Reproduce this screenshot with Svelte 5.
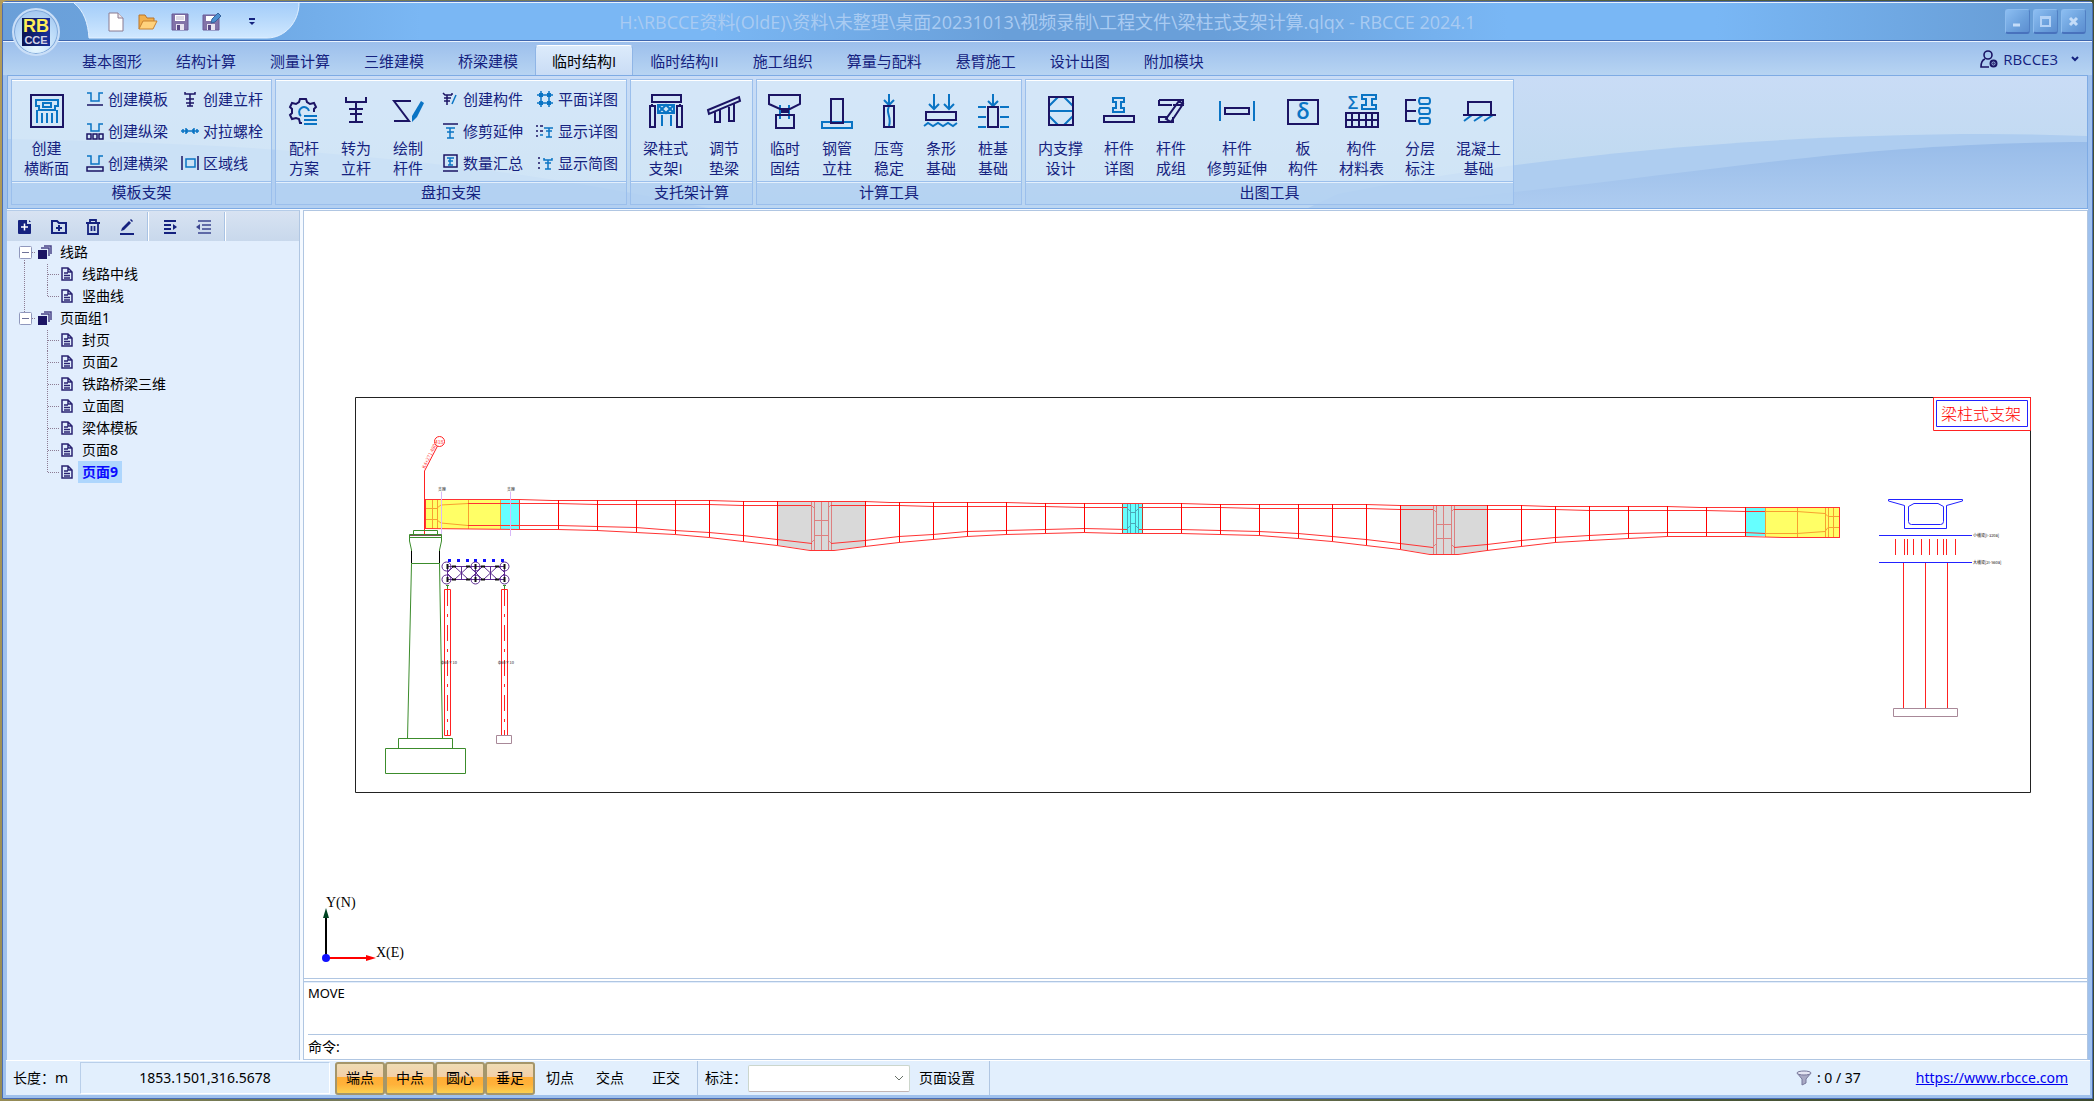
<script lang="ts">
  interface Glyph {
    dark?: string;
    blue?: string;
    fillBlue?: string;
    text?: string;
    tx?: number;
    ty?: number;
    ts?: number;
  }

  interface Tool {
    lines: string[];
    icon: string;
  }

  interface Group {
    title: string;
    big: Tool[];
    small: [string, string][][];
  }

  // 36x36 ribbon icons
  const bigIcons: Record<string, Glyph> = {
    section: {
      dark: 'M2 2h32v32H2z',
      blue: 'M7 7h22v6h-3v4H10v-4H7zM14 10h8v4h-8zM8 17v13M13 20v10M18 20v10M23 20v10M28 17v13',
    },
    gear: {
      dark: 'M16 30h-2l-1-4-3-1-4 1-2-4 2-2v-4l-2-2 2-4 4 1 3-2 1-3h6l1 3 3 2 4-1 2 4-2 2v3',
      blue: 'M15 23a5 5 0 1 1 8-5M18 23h13M18 27h13M18 31h13',
    },
    pole: { dark: 'M8 4v5h20V4M18 9v20M11 16h14M12 21h12M11 29h14' },
    drawbar: { dark: 'M21 8H4l15 20H4', fillBlue: 'M31 8l3 2-7 14-5 5v-6z' },
    beamColumn: {
      dark: 'M4 2h29v7H4zM2 13h5v21H2zM29 13h5v21h-5zM4 13v-2M32 13v-2',
      blue: 'M10 12h16v8H10zM10 12l8 8 8-8M10 20l8-8 8 8M14 22v11M23 22v11',
    },
    pad: { dark: 'M2 17L33 4l1 4L3 21zM9 19v10h5V17M23 14v14h5V11' },
    fix: {
      dark: 'M2 2h31v9l-10 5H13L2 11zM14 18h8M9 22h18v13H9zM14 19h8',
      blue: 'M13 12v14M22 12v14M11 22h4M20 22h4',
    },
    pipe: { dark: 'M12 6h12v24H12z', blue: 'M3 29h30v6H3z' },
    press: { dark: 'M13 13h10v21H13z', blue: 'M18 1v11M13 7l5 5 5-5M18 14c-4 5 3 9 0 19' },
    strip: {
      dark: 'M3 19h30v8H3z',
      blue: 'M11 1v15M6 11l5 5 5-5M26 1v15M21 11l5 5 5-5M1 33l4-3 5 3 5-3 5 3 5-3 5 3 4-3',
    },
    pile: {
      dark: 'M13 14h10v20H13z',
      blue: 'M18 1v12M13 8l5 5 5-5M3 14h8M25 14h9M3 24h8M25 24h9M3 34h8M25 34h9',
    },
    brace: { dark: 'M6 4h24v28H6z', blue: 'M6 18h24M15 4L6 13M21 4l9 9M6 23l9 9M30 23l-9 9' },
    detail: {
      dark: 'M3 23h30v6H3z',
      blue: 'M12 5h11v4h-3v6h3v4H12v-4h3V9h-3z',
    },
    group: { dark: 'M6 7h24v5H20M6 7v5h13M6 24h8v5H6zM14 29h6v-5M26 8l4 3-12 18-5-3z' },
    trim: { dark: 'M6 15h24v6H6z', blue: 'M1 8v20M35 8v20' },
    plate: { dark: 'M3 7h30v24H3z', text: 'δ', tx: 18, ty: 26, ts: 22 },
    list: {
      dark: 'M2 20h32v14H2zM2 27h32M8 20v14M15 20v14M22 20v14M28 20v14',
      blue: 'M18 2h14v4h-4v6h4v4H18v-4h4V6h-4z',
      text: 'Σ',
      tx: 9,
      ty: 16,
      ts: 18,
    },
    layer: {
      dark: 'M14 7H4v21h10M4 18h10',
      blue: 'M18 5h8q2 0 2 3t-2 3h-8q-2-3 0-6zM18 15h8q2 0 2 3t-2 3h-8q-2-3 0-6zM18 25h8q2 0 2 3t-2 3h-8q-2-3 0-6z',
    },
    concrete: { dark: 'M7 22V9h23v13M2 22h33', blue: 'M11 22l-8 6M22 22l-9 6M32 22l-9 6' },
  };

  // 18x18 ribbon icons
  const smallIcons: Record<string, Glyph> = {
    form: { dark: 'M1 15h16', blue: 'M1 3h4v8h8V3h4' },
    stringer: { dark: 'M1 12h4v5H1zM7 12h4v5H7zM13 12h4v5h-4z', blue: 'M1 2h4v7h8V2h4' },
    cross: { dark: 'M1 13h16v4H1z', blue: 'M1 2h4v8h8V2h4' },
    upright: { dark: 'M4 2v2h10V2M9 4v12M5 9h8M5 13h8M6 16h6' },
    bolt: { blue: 'M0 9h18M5 6v6M13 6v6M2 7v4M16 7v4M6 7v4M12 7v4' },
    region: { dark: 'M1 2v14M17 2v14', blue: 'M5 5h9v8H5z' },
    member: { dark: 'M2 3l2 2h7M6 5v10M3 8h7M3 11h6M11 5V3', blue: 'M15 5l-4 9' },
    extend: { dark: 'M2 2h15', blue: 'M5 6h9M9 6v10M6 10h7M6 16h7' },
    count: { dark: 'M3 1h13v12H3zM2 17h15', blue: 'M6 4h7M9 4v7M7 7h5M7 11h5' },
    plan: { blue: 'M1 5h16M1 13h16M5 1v16M13 1v16', fillBlue: 'M3 3h4v4H3zM11 3h4v4h-4zM3 11h4v4H3zM11 11h4v4h-4z' },
    showFull: { dark: 'M0 4h2M4 4h3M0 9h2M4 9h3M0 14h2', blue: 'M8 6h9M13 6v9M10 9h6M10 15h6M4 13h3' },
    showBrief: { dark: 'M3 3v2M3 8v2M3 13v2', blue: 'M8 4v2h8V4M12 6v9M9 9h6M9 15h6' },
  };

  const tabs = ['基本图形', '结构计算', '测量计算', '三维建模', '桥梁建模', '临时结构I', '临时结构II', '施工组织', '算量与配料', '悬臂施工', '设计出图', '附加模块'];

  const groups: Group[] = [
    {
      title: '模板支架',
      big: [{ lines: ['创建', '横断面'], icon: 'section' }],
      small: [
        [['创建模板', 'form'], ['创建纵梁', 'stringer'], ['创建横梁', 'cross']],
        [['创建立杆', 'upright'], ['对拉螺栓', 'bolt'], ['区域线', 'region']],
      ],
    },
    {
      title: '盘扣支架',
      big: [
        { lines: ['配杆', '方案'], icon: 'gear' },
        { lines: ['转为', '立杆'], icon: 'pole' },
        { lines: ['绘制', '杆件'], icon: 'drawbar' },
      ],
      small: [
        [['创建构件', 'member'], ['修剪延伸', 'extend'], ['数量汇总', 'count']],
        [['平面详图', 'plan'], ['显示详图', 'showFull'], ['显示简图', 'showBrief']],
      ],
    },
    {
      title: '支托架计算',
      big: [
        { lines: ['梁柱式', '支架I'], icon: 'beamColumn' },
        { lines: ['调节', '垫梁'], icon: 'pad' },
      ],
      small: [],
    },
    {
      title: '计算工具',
      big: [
        { lines: ['临时', '固结'], icon: 'fix' },
        { lines: ['钢管', '立柱'], icon: 'pipe' },
        { lines: ['压弯', '稳定'], icon: 'press' },
        { lines: ['条形', '基础'], icon: 'strip' },
        { lines: ['桩基', '基础'], icon: 'pile' },
      ],
      small: [],
    },
    {
      title: '出图工具',
      big: [
        { lines: ['内支撑', '设计'], icon: 'brace' },
        { lines: ['杆件', '详图'], icon: 'detail' },
        { lines: ['杆件', '成组'], icon: 'group' },
        { lines: ['杆件', '修剪延伸'], icon: 'trim' },
        { lines: ['板', '构件'], icon: 'plate' },
        { lines: ['构件', '材料表'], icon: 'list' },
        { lines: ['分层', '标注'], icon: 'layer' },
        { lines: ['混凝土', '基础'], icon: 'concrete' },
      ],
      small: [],
    },
  ];

  const tree = [
    { name: '线路', pages: ['线路中线', '竖曲线'] },
    { name: '页面组1', pages: ['封页', '页面2', '铁路桥梁三维', '立面图', '梁体模板', '页面8', '页面9'] },
  ];

  const snapNames = ['端点', '中点', '圆心', '垂足', '切点', '交点', '正交'];

  let activeTab = $state('临时结构I');
  let activePage = $state('页面9');
  let snaps = $state<string[]>(['端点', '中点', '圆心', '垂足']);

  function toggleSnap(name: string) {
    snaps = snaps.includes(name) ? snaps.filter((s) => s !== name) : [...snaps, name];
  }

  // segment joints of the continuous girder: x, top y, bottom y
  const joints = [
    [558.5, 500, 529], [597.5, 500, 530], [636.5, 500, 532], [675.5, 500, 534], [709.5, 500, 537],
    [743.5, 501, 541], [777.5, 501, 545], [865.5, 501, 546], [899.5, 502, 542], [933.5, 502, 539],
    [967.5, 502, 536], [1006.5, 502, 534], [1045.5, 503, 533], [1084.5, 503, 532], [1181.5, 503, 533],
    [1220.5, 504, 534], [1259.5, 504, 535], [1298.5, 504, 538], [1332.5, 504, 541], [1366.5, 504, 545],
    [1400.5, 505, 549], [1487.5, 505, 550], [1521.5, 505, 546], [1555.5, 506, 542], [1589.5, 506, 540],
    [1628.5, 506, 538], [1667.5, 506, 536], [1706.5, 507, 536], [1745.5, 507, 536],
  ];
  const topChord = '425,499.5 519,499.5 552,500.5 709,500.5 743,501.5 865,501.5 890,502.5 1006,502.5 1040,503.5 1181,503.5 1215,504.5 1366,504.5 1400,505.5 1521,505.5 1550,506.5 1667,506.5 1700,507.5 1840,507.5';
  const bottomChord = '425,528.5 519,529.5 558,529.5 597,530.5 636,532.5 675,534.5 709,537.5 743,541.5 777,545.5 810,550.5 834,550.5 865,546.5 899,542.5 933,539.5 967,536.5 1006,534.5 1045,533.5 1084,532.5 1122,533.5 1181,533.5 1220,534.5 1259,535.5 1298,538.5 1332,541.5 1366,545.5 1400,549.5 1430,554.5 1458,554.5 1487,550.5 1521,546.5 1555,542.5 1589,540.5 1628,538.5 1667,536.5 1745,536.5 1783,537.5 1840,537.5';
  const slabLines = [
    '468,503.5 558,503.5 597,504.5 709,504.5 743,505.5 811,505.5',
    '831,505.5 899,505.5 933,506.5 1045,506.5 1084,507.5 1127,507.5',
    '1139,507.5 1220,507.5 1259,508.5 1366,508.5 1400,509.5 1433,509.5',
    '1454,509.5 1555,509.5 1589,510.5 1706,510.5 1745,511.5 1765,511.5',
    '468,525.5 558,525.5 636,527.5 675,530.5 709,532.5 743,535.5 777,539.5 812,543.5',
    '831,543.5 865,540.5 899,536.5 933,534.5 967,531.5 1006,530.5 1084,528.5 1127,529.5',
    '1139,529.5 1181,529.5 1259,531.5 1298,533.5 1332,536.5 1366,539.5 1400,543.5 1433,547.5',
    '1454,547.5 1487,544.5 1521,540.5 1555,537.5 1589,535.5 1628,533.5 1667,532.5 1745,532.5 1765,533.5',
  ];

  const wedges = [449, 458, 467, 475, 484, 493, 502];
  const ticks = [1895.5, 1904.5, 1907.5, 1913.5, 1921.5, 1929.5, 1937.5, 1943.5, 1946.5, 1955.5];
</script>

{#snippet glyph(g: Glyph, size: number)}
  <svg class="glyph" width={size} height={size} viewBox="0 0 {size} {size}" aria-hidden="true" stroke-width={size > 20 ? 2 : 1.5}>
    {#if g.blue}<path class="gb" d={g.blue} />{/if}
    {#if g.dark}<path class="gd" d={g.dark} />{/if}
    {#if g.fillBlue}<path class="gf" d={g.fillBlue} />{/if}
    {#if g.text}<text class="gt" x={g.tx} y={g.ty} font-size={g.ts} text-anchor="middle">{g.text}</text>{/if}
  </svg>
{/snippet}

<div class="desktop">
  <div class="window">
    <header class="titlebar">
      <div class="quick">
        <svg class="quick-bg" viewBox="0 0 228 36" preserveAspectRatio="none" aria-hidden="true">
          <defs>
            <linearGradient id="quickFill" x1="0" y1="0" x2="0" y2="1">
              <stop offset="0" stop-color="#a4cdfa" />
              <stop offset="0.4" stop-color="#b4d7fb" />
              <stop offset="1" stop-color="#d0e8ff" />
            </linearGradient>
          </defs>
          <path d="M1 0c10 8 14 20 15 35h178c18 0 32-16 32-35z" fill="url(#quickFill)" />
          <path d="M1 0c10 8 14 20 15 35h178c18 0 32-16 32-35" fill="none" stroke="#e2f0ff" />
        </svg>
        <div class="quick-tools">
          <button aria-label="新建">
            <svg width="18" height="20" viewBox="0 0 18 20"><path d="M2 1h9l5 5v13H2z" fill="#fff" stroke="#8a7b90" /><path d="M11 1v5h5" fill="#eee6ea" stroke="#8a7b90" /></svg>
          </button>
          <button aria-label="打开">
            <svg width="20" height="20" viewBox="0 0 20 20"><path d="M1 17V3h6l2 3h7v3" fill="#f2b04c" stroke="#b8742a" /><path d="M1 17L5 9h14l-4 8z" fill="#ffd27d" stroke="#c98230" /></svg>
          </button>
          <button aria-label="保存">
            <svg width="18" height="20" viewBox="0 0 18 20"><path d="M1 2h16v16H1z" fill="#8273a8" stroke="#6a5a96" /><path d="M4 3h10v6H4z" fill="#fff" /><path d="M5 5h8M5 7h8" stroke="#b9b2cc" /><path d="M5 12h8v6H5z" fill="#e7e3f0" /><path d="M6 13h3v5H6z" fill="#5a4a86" /></svg>
          </button>
          <button aria-label="另存为">
            <svg width="20" height="20" viewBox="0 0 20 20"><path d="M1 3h16v15H1z" fill="#8273a8" stroke="#6a5a96" /><path d="M4 4h10v5H4z" fill="#fff" /><path d="M5 12h8v6H5z" fill="#e7e3f0" /><path d="M6 13h3v5H6z" fill="#5a4a86" /><path d="M10 7l6-6 3 3-6 6-4 1z" fill="#4d8fd0" stroke="#35639c" /></svg>
          </button>
          <button class="more" aria-label="自定义">
            <svg width="8" height="8" viewBox="0 0 8 8"><path d="M1 1h6" stroke="#15227f" stroke-width="2" /><path d="M1 4h6L4 7z" fill="#15227f" /></svg>
          </button>
        </div>
      </div>
      <h1>H:\RBCCE资料(OldE)\资料\未整理\桌面20231013\视频录制\工程文件\梁柱式支架计算.qlqx - RBCCE 2024.1</h1>
      <div class="win-buttons">
        <button aria-label="最小化"><svg width="13" height="13" viewBox="0 0 13 13"><path d="M2 10h7" stroke="#c4dcf8" stroke-width="3" /></svg></button>
        <button aria-label="最大化"><svg width="13" height="13" viewBox="0 0 13 13"><path d="M2 2h9v9H2zM1 3h11" fill="none" stroke="#b4d2f6" stroke-width="2" /></svg></button>
        <button aria-label="关闭"><svg width="13" height="13" viewBox="0 0 13 13"><path d="M3 3l7 7M10 3l-7 7" stroke="#c4dcf8" stroke-width="3" /></svg></button>
      </div>
    </header>

    <button class="orb" aria-label="RBCCE">
      <span class="orb-badge"><b>RB</b><i>CCE</i></span>
    </button>

    <nav class="tabs">
      {#each tabs as tab}
        <button class="tab" class:active={tab === activeTab} onclick={() => (activeTab = tab)}>{tab}</button>
      {/each}
      <button class="user">
        <svg width="18" height="20" viewBox="0 0 18 20" fill="none" stroke="#1b1464" stroke-width="1.6">
          <circle cx="8" cy="6" r="4" />
          <path d="M5 10c-3 1-4 4-4 8h8" />
          <circle cx="13.500" cy="14.500" r="3" stroke-width="2" />
          <circle cx="13.500" cy="14.500" r="0.500" />
        </svg>
        <span>RBCCE3</span>
        <svg width="8" height="6" viewBox="0 0 8 6"><path d="M1 1l3 3 3-3" fill="none" stroke="#15227f" stroke-width="2" /></svg>
      </button>
    </nav>

    <section class="ribbon">
      <svg class="ribbon-bg" viewBox="0 0 2079 132" preserveAspectRatio="none" aria-hidden="true">
        <defs>
          <linearGradient id="waveTop" x1="0" y1="0" x2="0" y2="1">
            <stop offset="0" stop-color="#c9dcf6" />
            <stop offset="0.600" stop-color="#c1daf1" />
            <stop offset="1" stop-color="#bbd6f2" />
          </linearGradient>
          <linearGradient id="waveLow" x1="0" y1="0" x2="0" y2="1">
            <stop offset="0" stop-color="#98bce9" />
            <stop offset="1" stop-color="#aeccf0" />
          </linearGradient>
        </defs>
        <rect width="2079" height="132" fill="url(#waveTop)" />
        <path d="M0 63C260 68 460 82 700 132H0z" fill="#b2cff1" />
        <path d="M1330 118C1500 84 1740 58 1980 58q50 0 99 2v72H1300z" fill="#aecdf0" />
        <path d="M1330 132C1640 110 1800 67 2079 66v66z" fill="url(#waveLow)" />
      </svg>
      <div class="groups">
        {#each groups as group}
          <div class="group" role="group" aria-label={group.title}>
            <div class="group-body">
              {#each group.big as tool}
                <button class="big">
                  {@render glyph(bigIcons[tool.icon], 36)}
                  <span>{tool.lines[0]}<br />{tool.lines[1]}</span>
                </button>
              {/each}
              {#each group.small as column}
                <div class="small-col">
                  {#each column as [text, icon]}
                    <button class="small">
                      {@render glyph(smallIcons[icon], 18)}
                      <span>{text}</span>
                    </button>
                  {/each}
                </div>
              {/each}
            </div>
            <div class="group-title">{group.title}</div>
          </div>
        {/each}
      </div>
    </section>

    <div class="work">
      <aside class="sidebar">
        <div class="side-tools">
          <button aria-label="新建页面"><svg viewBox="0 0 16 16"><path d="M1 2q0-1 1-1h8v4h4v9q0 1-1 1H2q-1 0-1-1zM12 1l2 2h-2z" fill="#15227f" /><path d="M4 8h7M7.500 4.500v7" stroke="#fff" stroke-width="1.500" /></svg></button>
          <button aria-label="新建组"><svg viewBox="0 0 16 16"><path d="M1 2h5l2 2h7v10H1zM8 6v6M5 9h6" fill="none" stroke="#15227f" stroke-width="2" /></svg></button>
          <button aria-label="删除"><svg viewBox="0 0 16 16"><path d="M1 4h14M5 4V1h6v3M3 4v11h10V4M6.500 7v5M9.500 7v5" fill="none" stroke="#15227f" stroke-width="1.800" /></svg></button>
          <button aria-label="编辑"><svg viewBox="0 0 16 16"><path d="M1 15h14" stroke="#15227f" stroke-width="2" /><path d="M2 12l1-3 7-7 2 2-7 7zM11 1l1-1 2 2-1 1z" fill="#15227f" /></svg></button>
          <span class="side-sep"></span>
          <button aria-label="展开"><svg viewBox="0 0 16 16"><path d="M2 2h12M2 6h7M2 10h7M2 14h12" stroke="#15227f" stroke-width="2" /><path d="M11 5l4 3-4 3z" fill="#15227f" /></svg></button>
          <button aria-label="折叠"><svg viewBox="0 0 16 16"><path d="M2 2h13M6 6h9M6 10h9M2 14h13" stroke="#3b4590" stroke-width="1.500" /><path d="M4 5L0 8l4 3z" fill="#3b4590" /></svg></button>
          <span class="side-sep"></span>
        </div>
        <ul class="tree">
          {#each tree as node, n}
            <li>
              <div class="row">
                <svg class="guide-root" width="30" height="22" viewBox="0 0 30 22" aria-hidden="true">
                  {#if n > 0}<path class="dots" d="M17.500 0v5" />{/if}
                  {#if n < tree.length - 1}<path class="dots" d="M17.500 17v5" />{/if}
                  <path class="dots" d="M25 11.500h4" />
                  <rect x="12.500" y="5.500" width="12" height="12" rx="1" fill="#fff" stroke="#9098bd" />
                  <path d="M15 11.500h7" stroke="#6e7299" />
                </svg>
                <svg width="14" height="14" viewBox="0 0 14 14" aria-hidden="true">
                  <path d="M0 5h9v9H0z" fill="#1b1464" /><path d="M3 3h8v8M6 1h7v8" fill="none" stroke="#4a4488" stroke-width="1.500" />
                </svg>
                <span class="node">{node.name}</span>
              </div>
              <ul>
                {#each node.pages as page, i}
                  <li class="row">
                    <svg width="53" height="22" viewBox="0 0 53 22" aria-hidden="true">
                      {#if n < tree.length - 1}<path class="dots" d="M17.500 0v22" />{/if}
                      <path class="dots" d="M40.500 {i === 0 ? 1 : 0}v{i === node.pages.length - 1 ? 11 : 22}M41 11.500h12" />
                    </svg>
                    <svg width="14" height="14" viewBox="0 0 14 14" aria-hidden="true">
                      <path d="M2 1h6l4 4v8H2zM4 6h4M4 8.500h6M4 11h6M8 1v4h4" fill="none" stroke="#2a2372" stroke-width="1.500" />
                    </svg>
                    <button class="page" class:selected={page === activePage} onclick={() => (activePage = page)}>{page}</button>
                  </li>
                {/each}
              </ul>
            </li>
          {/each}
        </ul>
      </aside>

      <main class="main">
        <div class="canvas">
          <svg class="drawing" viewBox="304 211 1783 767" preserveAspectRatio="xMidYMid meet" fill="none">
            <path d="M355.500 397.500H2030.500V792.500H355.500z" stroke="#222" />

            <!-- title box -->
            <path d="M1933.500 397.500h97v33h-97z" stroke="#f22" />
            <path d="M1936.500 400.500h91v26h-91z" stroke="#22f" />
            <text class="thin" x="1941" y="420" font-size="16" fill="#f00">梁柱式支架</text>

            <!-- girder segments -->
            <path d="M425 500h76v29h-76z" fill="#ff6" />
            <path d="M501 500h18v29h-18z" fill="#6ff" />
            <path d="M777 501h89v45l-32 4h-24l-33-5z" fill="#d9d9d9" />
            <path d="M1122 503h21v30h-21z" fill="#6ff" />
            <path d="M1400 505h88v45l-30 4h-28l-30-5z" fill="#d9d9d9" />
            <path d="M1745 507h20v29h-20z" fill="#6ff" />
            <path d="M1765 507h75v30h-75z" fill="#ff6" />

            <g class="inner">
              <path d="M811.500 501v49M814.500 501v49M821.500 501v49M828.500 501v49M831.500 501v49M814 520.500h14M814 535.500h14M811 505l3 3M831 505l-3 3M811 543l3-3M831 543l-3-3" />
              <path d="M1433.500 505v49M1436.500 505v49M1443.500 505v49M1451.500 505v49M1454.500 505v49M1436 524.500h15M1436 538.500h15M1433 509l3 3M1454 509l-3 3M1433 547l3-3M1454 547l-3-3" />
            </g>
            <g stroke="#f8a030">
              <path d="M432.500 500v29M437.500 500v29M468.500 500v29M425 508.500h12M425 519.500h12M437 508l4-3 27-1.500M437 520l4 3 27 2.500M500.500 500v29" />
              <path d="M1797.500 507v30M1825.500 507v30M1828.500 507v30M1833.500 507v30M1828 516.500h12M1828 527.500h12M1765 511.500h32l28 2 3 3M1765 533.500h32l28-2 3-4M1765.500 507v30" />
            </g>
            <path d="M1127.500 503v30M1130.500 503v30M1135.500 503v30M1138.500 503v30M1130 512.500h6M1130 523.500h6M1127 508l4 4M1139 508l-4 4M1127 529l4-4M1139 529l-4-4" stroke="#4aa8b8" />
            <path d="M1122.500 503v30M1142.500 503v30" stroke="#c0402a" />

            <g class="girder">
              <polyline points={topChord} />
              <polyline points={bottomChord} />
              {#each slabLines as points}
                <polyline {points} />
              {/each}
              {#each joints as [x, y1, y2]}
                <path class="joint" d="M{x} {y1}V{y2}" />
              {/each}
              <path d="M425.500 499V529M441.500 499V529M519.500 499V529M1839.500 507V538" />
            </g>
            <path d="M441.500 492v44M510.500 492v44" stroke="#d9b8f8" />
            <text x="438" y="491" font-size="4" fill="#222">支座</text>
            <text x="507" y="491" font-size="4" fill="#222">支座</text>

            <!-- chainage flag -->
            <path d="M424.500 534V471l13-25" stroke="#f22" />
            <circle cx="439.500" cy="441.500" r="5" stroke="#f22" />
            <text x="435" y="444" font-size="5" fill="#f22">418</text>
            <text transform="translate(425 469) rotate(-64)" font-size="5" fill="#f44">K4+271.480</text>

            <!-- pier -->
            <g stroke="#3c8c2c">
              <path d="M413.500 534v-3.500h24v3.500M409.500 534.500h32v3h-32zM409.500 537v4l2 9v13.500h28V550l2-9v-4" />
              <path d="M411.500 563.500l-4 175M439.500 563.500l3 175M398.500 738.500h54v10h-54zM385.500 748.500h80v25h-80z" />
            </g>
            <path d="M411.500 551v12M439.500 551v12" stroke="#000" />
            <path d="M410 535.500h31" stroke="#755" />

            <!-- bailey truss -->
            {#each wedges as x}
              <path d="M{x - 1} 559h3v3h-3z" fill="#11f" />
            {/each}
            <g stroke="#5b2a90">
              <path d="M447 566.500h58M447 579.500h58M447.500 566v14M461.500 566v14M475.500 566v14M490.500 566v14M504.500 566v14" />
              <path d="M447 573l7-7 15 14 7-7-7-7-15 14zM476 573l7-7 15 14 7-7-7-7-15 14z" />
              {#each [446.5, 475.5, 504.5] as x}
                <circle cx={x} cy="566.500" r="4.500" />
                <circle cx={x} cy="579.500" r="4.500" />
              {/each}
            </g>
            <path d="M447.500 564v5M447.500 577v5M475.500 564v5M475.500 577v5M504.500 564v5M504.500 577v5M452 566.500h4M466 566.500h4M481 566.500h4M495 566.500h4M452 579.500h4M466 579.500h4M481 579.500h4M495 579.500h4" stroke="#111" stroke-width="2" />

            <!-- temporary columns -->
            <path d="M444.500 589.500h6v146h-6zM501.500 589.500h6v146h-6z" stroke="#f22" />
            <path d="M447.500 590V735M504.500 590V735" stroke="#f22" stroke-dasharray="16 8 3 8" />
            <path d="M446 585.500h3M447.500 585v4M503 585.500h3M504.500 585v4" stroke="#3c8c2c" />
            <path d="M496.500 735.500h15v8h-15z" stroke="#a88898" />
            <text x="441" y="664" font-size="4" fill="#222">φ60×10</text>
            <text x="498" y="664" font-size="4" fill="#222">φ60×10</text>

            <!-- cross section -->
            <g stroke="#22f">
              <path d="M1888.500 501v-1.500h74v1.500l-16 4.500v23h-42v-23z" />
              <path d="M1914 503.500h24l5.500 3v15q0 3-3 3h-29q-3 0-3-3v-15z" />
              <path d="M1879 535.500h93M1879 562.500h93" />
            </g>
            <g stroke="#f22">
              {#each ticks as x}
                <path d="M{x} 539v16" />
              {/each}
              <path d="M1903.500 563v145M1925.500 563v145M1947.500 563v145" />
            </g>
            <path d="M1893.500 708.500h64v8h-64z" stroke="#a88898" />
            <text x="1973" y="537" font-size="4" fill="#211">小横梁[I-320a]</text>
            <text x="1973" y="564" font-size="4" fill="#211">大横梁[2I-560a]</text>

            <!-- axes -->
            <path d="M326 958V916" stroke="#000" stroke-width="2" />
            <path d="M326 908l3 10h-6z" fill="#042" />
            <path d="M326 958h42" stroke="#f00" stroke-width="2" />
            <path d="M376 958l-10-3v6z" fill="#f00" />
            <circle cx="326" cy="958" r="4" fill="#11f" />
            <g class="axis">
              <text x="326" y="907">Y(N)</text>
              <text x="376" y="957">X(E)</text>
            </g>
          </svg>
        </div>
        <div class="console">
          <div class="log">MOVE</div>
          <label class="prompt"><span>命令:</span><input type="text" /></label>
        </div>
      </main>
    </div>

    <footer class="status">
      <span class="unit">长度：m</span>
      <span class="coords">1853.1501,316.5678</span>
      {#each snapNames as name}
        <button class="snap" class:wide={name === '正交'} class:on={snaps.includes(name)} aria-pressed={snaps.includes(name)} onclick={() => toggleSnap(name)}>{name}</button>
      {/each}
      <span class="vsep"></span>
      <label class="dim" for="dimStyle">标注：</label>
      <select id="dimStyle"><option></option></select>
      <button class="setup">页面设置</button>
      <span class="vsep"></span>
      <span class="filter">
        <svg width="16" height="16" viewBox="0 0 16 16" aria-hidden="true">
          <path d="M1 3l5 6v6l4-2V9l5-6z" fill="#a9a9c4" stroke="#77779a" /><ellipse cx="8" cy="3" rx="7" ry="2" fill="#e4e4f2" stroke="#77779a" />
        </svg>
        : 0 / 37
      </span>
      <a href="https://www.rbcce.com">https://www.rbcce.com</a>
    </footer>
  </div>
</div>

<style>
  :global(body) { margin: 0; }

  .desktop {
    box-sizing: border-box;
    min-height: 100vh;
    padding: 1px 1px 2px 2px;
    display: flex;
    background: linear-gradient(100deg, #b59c58, #6e7652 20%, #a89488 45%, #54603c 70%, #3c4a30);
    font-family: 'Noto Sans', 'Noto Sans CJK SC', sans-serif;
    font-size: 14px;
    line-height: 20px;
    color: #000;
  }
  button {
    margin: 0;
    padding: 0;
    border: 0;
    background: none;
    font: inherit;
    color: inherit;
    cursor: default;
  }
  svg { display: block; flex-shrink: 0; }

  .window {
    position: relative;
    flex: 1;
    min-width: 0;
    display: flex;
    flex-direction: column;
    border: 1px solid #4a6db5;
    border-radius: 4px 4px 0 0;
    background: #9fc1ed;
  }

  /* title bar */
  .titlebar {
    height: 39px;
    box-sizing: border-box;
    display: grid;
    grid-template-columns: 1fr auto 1fr;
    align-items: center;
    border-top: 1px solid #e6f1fd;
    border-bottom: 1px solid #3f66ae;
    background: linear-gradient(90deg, #6a9fd8, #6ca5e0 10%, #7ab7f4 20%, #7ab7f4 34%, #699fd9 48%, #699fd9 58%, #79b7f5 72%, #79b7f5 82%, #699fd8 96%);
  }
  .quick {
    display: grid;
    width: 228px;
    height: 37px;
    margin-left: 70px;
  }
  .quick-bg, .quick-tools { grid-area: 1 / 1; }
  .quick-bg { width: 100%; height: 36px; }
  .quick-tools {
    display: flex;
    align-items: center;
    gap: 13px;
    padding-left: 34px;
  }
  .more { margin-left: 13px; }
  h1 {
    margin: 0;
    text-align: center;
    font-family: 'Open Sans', 'Noto Sans CJK SC', sans-serif;
    font-size: 18px;
    line-height: 28px;
    font-weight: 400;
    color: #a9cbf2;
    white-space: nowrap;
  }
  .win-buttons { display: flex; gap: 3px; justify-self: end; padding-right: 6px; }
  .win-buttons button {
    width: 25px;
    height: 25px;
    display: grid;
    place-items: center;
    border: 1px solid #8dbcee;
    border-right-color: #5180c4;
    border-bottom: 2px solid #4872bd;
    border-radius: 3px;
    background: linear-gradient(135deg, #8cbef2, #6ba0dc 60%, #5c8ed0);
    box-sizing: border-box;
  }

  .orb {
    position: absolute;
    left: 9px;
    top: 6px;
    width: 48px;
    height: 48px;
    display: grid;
    place-items: center;
    border: 2px solid #c9def7;
    border-radius: 50%;
    background: radial-gradient(circle at 50% 85%, #e8f8ff, #b5d6f7 60%, #9cbfea);
    box-shadow: inset 0 0 0 1px #7fa8da;
  }
  .orb-badge {
    width: 28px;
    height: 28px;
    display: flex;
    flex-direction: column;
    align-items: center;
    background: linear-gradient(90deg, #0b1450, #17309c);
    font-family: 'Liberation Sans', sans-serif;
  }
  .orb-badge b { font-size: 18px; line-height: 17px; color: #ffee58; }
  .orb-badge i { font-size: 11px; font-style: normal; font-weight: 700; line-height: 10px; color: #d5d3e6; }

  /* tabs */
  .tabs {
    height: 34px;
    box-sizing: border-box;
    display: flex;
    align-items: flex-end;
    padding: 0 13px 0 62px;
    border-top: 1px solid #e9f3ff;
    background: linear-gradient(#9cbfec, #b7d4f2);
    font-family: 'Open Sans', 'Noto Sans CJK SC', sans-serif;
    font-size: 15px;
    color: #15227f;
  }
  .tab {
    height: 30px;
    padding: 0 16px;
    border: 1px solid transparent;
    border-bottom: 0;
    border-radius: 4px 4px 0 0;
    box-sizing: border-box;
    white-space: nowrap;
  }
  .tab.active {
    color: #000;
    border-color: #8fb5e6;
    border-top-color: #fff;
    background: linear-gradient(#dcebfb, #c9dcf5);
  }
  .user {
    margin-left: auto;
    height: 33px;
    display: flex;
    align-items: center;
    gap: 5px;
  }
  .user span { margin-right: 8px; }

  /* ribbon */
  .ribbon {
    display: grid;
    margin: 0 4px;
    border: 1px solid #7eabe4;
    box-shadow: inset 0 1px 0 #fff;
    min-width: 0;
  }
  .ribbon-bg, .groups { grid-area: 1 / 1; min-width: 0; }
  .ribbon-bg { width: 100%; height: 132px; }
  .groups { display: flex; gap: 3px; padding: 3px; z-index: 0; }
  .group {
    display: flex;
    flex-direction: column;
    border: 1px solid #9bbfec;
    box-shadow: inset 0 1px 0 #fff;
    background: rgba(220, 236, 250, 0.6);
    font-family: 'Open Sans', 'Noto Sans CJK SC', sans-serif;
    font-size: 15px;
    color: #15227f;
    height: 124px;
  }
  .group-body { flex: 1; display: flex; padding: 0 2px; }
  .big {
    min-width: 52px;
    padding-top: 13px;
    display: flex;
    flex-direction: column;
    align-items: center;
    gap: 9px;
    white-space: nowrap;
  }
  .big span { padding: 0 10px; }
  .small-col { display: flex; flex-direction: column; padding-top: 3px; }
  .small {
    width: 95px;
    height: 32px;
    display: flex;
    align-items: center;
    gap: 4px;
    padding-left: 7px;
    white-space: nowrap;
  }
  .group-title {
    height: 22px;
    line-height: 20px;
    text-align: center;
    border-top: 1px solid #9bbfec;
    box-shadow: inset 0 1px 0 #e3effc;
    background: rgba(160, 196, 238, 0.55);
  }
  .glyph { fill: none; overflow: visible; }
  .gd { stroke: #1b1464; }
  .gb { stroke: #0a74c4; }
  .gf { fill: #0a74c4; }
  .gt { fill: #0a74c4; font-family: 'Open Sans', 'Noto Sans', sans-serif; font-weight: 600; }

  /* workspace */
  .work {
    flex: 1;
    min-height: 0;
    display: flex;
    gap: 3px;
    margin: 0 4px;
    padding-top: 1px;
    background: #f4f9ff;
  }
  .sidebar {
    flex: 0 0 293px;
    box-sizing: border-box;
    border-right: 1px solid #b0c6e2;
    border-top: 1px solid #b5cce8;
    background: #e2eefd;
  }
  .side-tools {
    height: 29px;
    padding: 1px 0 0 1px;
    display: flex;
    align-items: center;
    background: linear-gradient(#d8e3f2, #c8d8ec);
  }
  .side-tools button { width: 34px; height: 29px; display: grid; place-items: center; }
  .side-tools svg { width: 16px; height: 16px; }
  .side-sep { width: 1px; height: 29px; margin: 0 4px 0 3px; background: #a9c3e4; border-right: 1px solid #fff; }
  .tree, .tree ul { list-style: none; margin: 0; padding: 0; }
  .row { display: flex; align-items: center; height: 22px; }
  .dots { stroke: #8d7c94; stroke-dasharray: 1 1; }
  .guide-root { margin-right: 1px; }
  .node { padding-left: 8px; }
  .page { height: 22px; margin-left: 4px; padding: 0 4px; white-space: nowrap; }
  .page.selected { background: #aed6fd; color: #0a0aff; font-weight: 700; }

  .main {
    flex: 1;
    min-width: 0;
    display: flex;
    flex-direction: column;
    border: 1px solid #b0c6e2;
    background: #fff;
  }
  .canvas {
    flex: 1 1 0;
    min-height: 0;
    display: flex;
    border-bottom: 1px solid #b0c6e2;
  }
  .drawing {
    width: 100%;
    height: 100%;
    font-family: 'Noto Sans CJK SC', sans-serif;
  }
  .drawing .girder { stroke: #f33; }
  .drawing .joint { stroke: #f00; }
  .drawing .inner { stroke: #dd8080; }
  .drawing .thin { font-weight: 300; }
  .drawing .axis { font-family: 'Liberation Serif', serif; font-size: 14px; fill: #000; }

  .console {
    margin-top: 2px;
    padding-left: 4px;
    border-top: 1px solid #b0c6e2;
    box-shadow: inset 0 1px 0 #e2eefd;
    font-size: 13px;
  }
  .log { height: 51px; padding-top: 1px; }
  .prompt {
    display: flex;
    align-items: center;
    height: 24px;
    border-top: 1px solid #b0c6e2;
    font-size: 14px;
  }
  .prompt input { flex: 1; border: 0; outline: 0; background: none; font: inherit; height: 20px; padding: 0; }

  /* status bar */
  .status {
    height: 35px;
    box-sizing: border-box;
    display: flex;
    align-items: center;
    margin: 0 2px 3px 3px;
    border-top: 1px solid #fff;
    background: #e2effd;
    white-space: nowrap;
  }
  .unit { width: 67px; padding-left: 7px; }
  .coords {
    width: 248px;
    height: 30px;
    line-height: 30px;
    text-align: center;
    border: 1px solid #b9cfea;
    border-right-color: #fff;
    border-bottom-color: #fff;
    margin-right: 5px;
  }
  .snap {
    width: 50px;
    height: 33px;
    border: 2px solid transparent;
    border-radius: 3px;
    box-sizing: border-box;
  }
  .snap.wide { width: 62px; }
  .snap.on {
    border-color: #a5966a;
    background: linear-gradient(#efdcb4, #f3cfa8 45%, #ffae35 46%, #ffb13a 70%, #fbd050);
  }
  .vsep { width: 1px; height: 100%; background: #b0c6e2; }
  .dim { padding: 0 0 0 7px; width: 43px; }
  select {
    width: 162px;
    height: 27px;
    appearance: none;
    border: 1px solid #ccd6cc;
    border-bottom-color: #c0b4b4;
    border-radius: 2px;
    background: #fff url("data:image/svg+xml,%3Csvg xmlns='http://www.w3.org/2000/svg' width='10' height='6'%3E%3Cpath d='M1 1l4 4 4-4' fill='none' stroke='%23667066'/%3E%3C/svg%3E") no-repeat right 5px center;
  }
  .setup { padding: 0 14px 0 9px; }
  .filter { margin-left: auto; display: flex; align-items: center; gap: 5px; }
  .status a { margin: 0 22px 0 55px; color: #0000f0; }
</style>
